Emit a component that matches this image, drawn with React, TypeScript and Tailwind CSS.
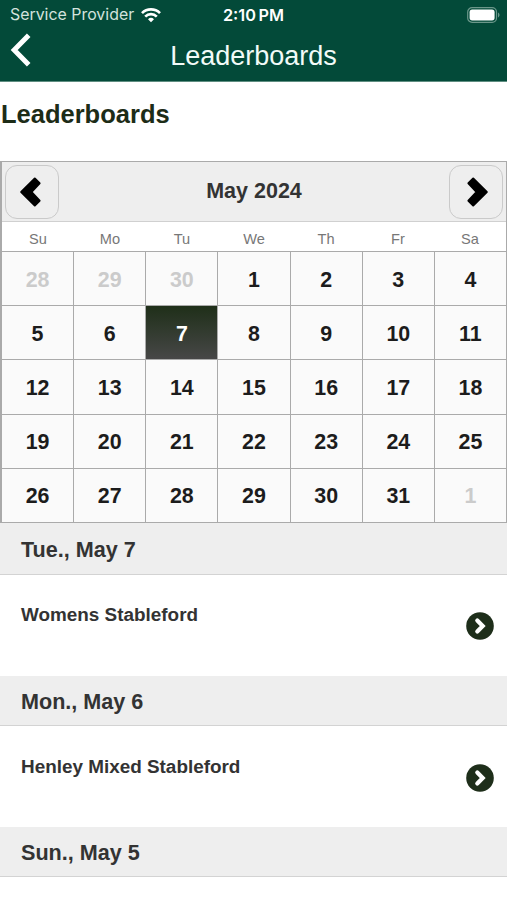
import { FC } from 'react';

const weekdays = ['Su', 'Mo', 'Tu', 'We', 'Th', 'Fr', 'Sa'];

const days = [
  28, 29, 30, 1, 2, 3, 4,
  5, 6, 7, 8, 9, 10, 11,
  12, 13, 14, 15, 16, 17, 18,
  19, 20, 21, 22, 23, 24, 25,
  26, 27, 28, 29, 30, 31, 1,
];

const FIRST_DAY = 3;
const LAST_DAY = 33;
const SELECTED = 9;

const groups = [
  { date: 'Tue., May 7', event: 'Womens Stableford' },
  { date: 'Mon., May 6', event: 'Henley Mixed Stableford' },
  { date: 'Sun., May 5', event: null },
];

const StatusBar: FC = () => (
  <div className="grid h-[30px] grid-cols-3 items-center font-['Inter',sans-serif] text-white">
    <div className="flex items-center gap-[7px] pl-[10px]">
      <span className="whitespace-nowrap text-[15.9px] leading-5 text-[#d3e2dd]">Service Provider</span>
      <svg width="20" height="15" viewBox="0 0 20 15" fill="none" stroke="currentColor" strokeWidth="2.7">
        <path d="M1 5.1a12.8 12.8 0 0 1 18 0" />
        <path d="M4.2 8.6a8.2 8.2 0 0 1 11.6 0" />
        <path d="M7 11.2a4.3 4.3 0 0 1 6 0L10 14.3z" fill="currentColor" stroke="none" />
      </svg>
    </div>
    <div className="whitespace-nowrap text-center text-[16.3px] font-semibold leading-5 [word-spacing:-1.5px]">
      2:10 PM
    </div>
    <div className="flex justify-end pr-[7px]">
      <svg width="33" height="16" viewBox="0 0 33 16">
        <rect x="0.7" y="0.7" width="28.8" height="14.6" rx="4.4" fill="none" stroke="#6b978a" strokeWidth="1.2" />
        <rect x="2.6" y="2.6" width="25" height="10.8" rx="2.6" fill="#fff" />
        <path d="M31 5.6c2 .8 2 4 0 4.8z" fill="#6b978a" />
      </svg>
    </div>
  </div>
);

const NavBar: FC = () => (
  <div className="grid h-[51px] grid-cols-[60px_1fr_60px] items-center">
    <button className="pb-[11px] pl-[10px] text-white">
      <svg width="21" height="34" viewBox="0 0 21 34" fill="none" stroke="currentColor" strokeWidth="5">
        <path d="M18.7 2.2L4.2 17L18.7 31.8" />
      </svg>
    </button>
    <h1 className="pt-px text-center text-[27px] leading-8 text-[#f2fbf8]">Leaderboards</h1>
  </div>
);

const MonthButton: FC<{ next?: boolean }> = ({ next }) => (
  <button className="flex size-[54px] items-center justify-center rounded-[12px] border border-[#cacaca] bg-[#eee]">
    <svg
      width="22"
      height="32"
      viewBox="0 0 22 32"
      fill="#000"
      stroke="#000"
      strokeWidth="2"
      strokeLinejoin="round"
      className={next ? 'translate-x-[2px] rotate-180' : '-translate-x-[2px]'}
    >
      <path d="M15.8 2.5L20.6 7.2L12.4 16L20.6 24.8L15.8 29.5L2.2 16z" />
    </svg>
  </button>
);

const dayClass = (index: number) => {
  if (index === SELECTED) return 'bg-linear-to-b from-[#1f2f19] to-[#474747] text-white';
  if (index < FIRST_DAY || index > LAST_DAY) return 'bg-[#fafafa] text-[#cbcbcb]';
  return 'bg-[#fafafa] text-[#1c1c1c]';
};

const Calendar: FC = () => (
  <div className="mt-[14px] h-[362px] border border-l-2 border-[#aaa]">
    <div className="flex h-[60px] items-center justify-between border-b border-[#d0d0d0] bg-[#eee] px-[3px]">
      <MonthButton />
      <span className="pb-px text-[21.5px] font-bold leading-7 text-[#333]">May 2024</span>
      <MonthButton next />
    </div>
    <div className="grid h-[29px] grid-cols-7 items-center pt-[5px] text-center text-[14.6px] leading-5 text-[#777]">
      {weekdays.map((day) => (
        <span key={day}>{day}</span>
      ))}
    </div>
    <div className="grid h-[271px] grid-cols-7 grid-rows-5 gap-px border-t border-[#aaa] bg-[#aaa]">
      {days.map((day, index) => (
        <div
          key={index}
          className={`flex items-center justify-center pt-[2px] text-[21.4px] font-bold leading-7 ${dayClass(index)}`}
        >
          {day}
        </div>
      ))}
    </div>
  </div>
);

const App: FC = () => {
  return (
    <main className="h-[900px] w-[507px] overflow-hidden bg-white font-['Liberation_Sans',Arial,sans-serif]">
      <header className="h-[82px] border-b border-[#5f8e81] bg-[#034a39]">
        <StatusBar />
        <NavBar />
      </header>
      <h2 className="h-[65px] pl-px pt-4 text-[25.5px] font-bold leading-8 text-[#1d2c17]">Leaderboards</h2>
      <Calendar />
      {groups.map((group, index) => (
        <section key={group.date}>
          <h3
            className={`flex items-center border-b border-[#d3d3d3] bg-[#eee] pl-[21px] text-[21.6px] font-bold leading-7 text-[#333] ${
              index === 0 ? 'h-[52px] pt-[3px]' : 'h-[50px] pt-[2px]'
            }`}
          >
            {group.date}
          </h3>
          {group.event && (
            <div className={`flex h-[101px] items-start justify-between pl-[21px] pr-[13px] ${index === 0 ? '' : 'pt-px'}`}>
              <p className="pt-[28px] text-[18.9px] font-bold leading-6 text-[#333]">{group.event}</p>
              <svg width="28" height="28" viewBox="0 0 28 28" className="mt-[37px]">
                <circle cx="14" cy="14" r="13.8" fill="#1e2e1a" />
                <path d="M11.3 8.6L16.7 14L11.3 19.4" fill="none" stroke="#fff" strokeWidth="4.2" strokeLinecap="round" />
              </svg>
            </div>
          )}
        </section>
      ))}
    </main>
  );
};

export default App;
